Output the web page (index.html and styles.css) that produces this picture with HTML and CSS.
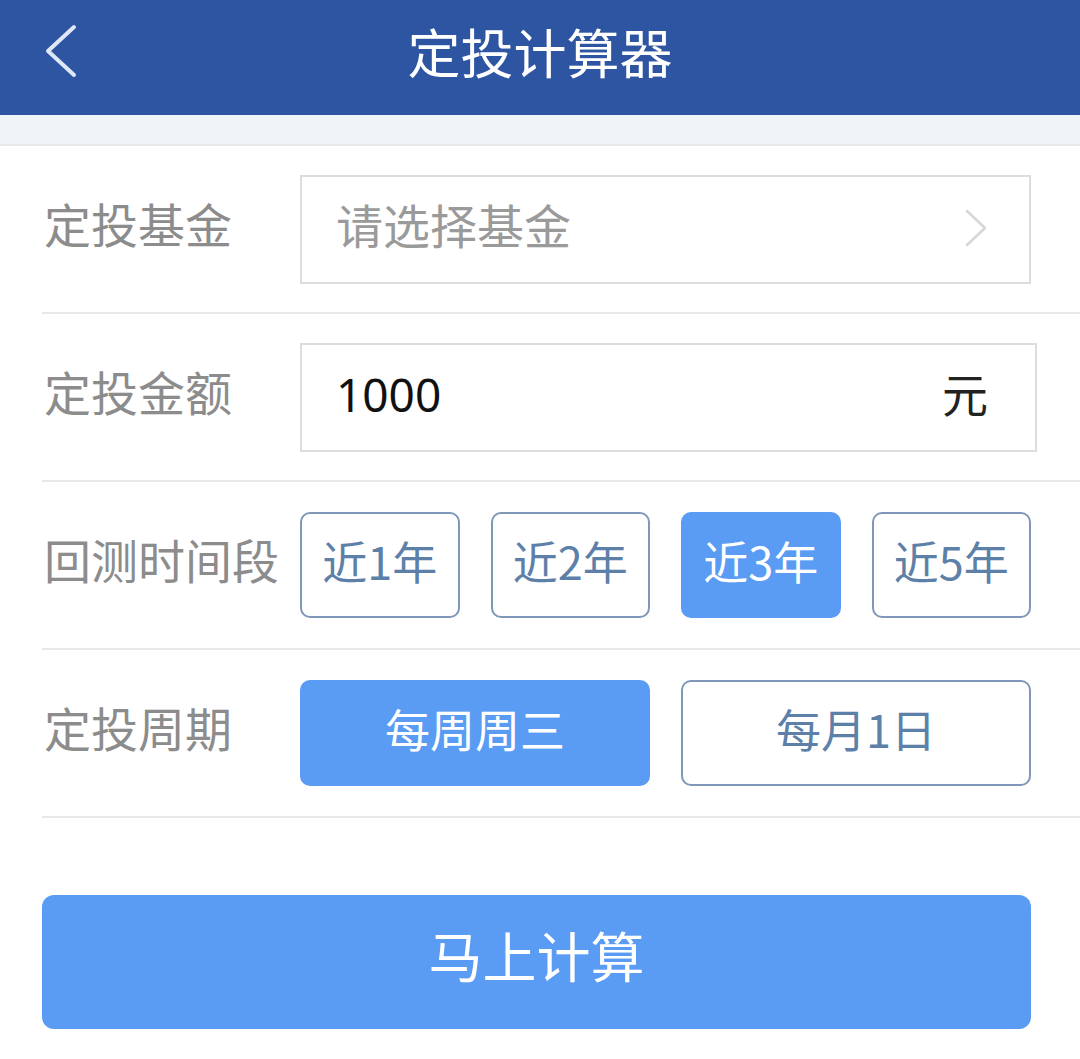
FILE: index.html
```html
<!DOCTYPE html>
<html lang="zh-CN">
<head>
<meta charset="utf-8">
<title>定投计算器</title>
<link rel="stylesheet" href="styles.css">
</head>
<body>
<header class="topbar">
  <span class="back">
    <svg width="40" height="56" viewBox="0 0 40 56"><polyline points="32,4 6,28 32,52" fill="none" stroke="#dfe6f5" stroke-width="4" stroke-linecap="round" stroke-linejoin="round"/></svg>
  </span>
  <h1 class="title">定投计算器</h1>
</header>
<div class="band"></div>
<main class="form">
  <div class="row">
    <div class="label">定投基金</div>
    <div class="field select">
      <span class="placeholder">请选择基金</span>
      <svg class="arrow" width="26" height="40" viewBox="0 0 26 40"><polyline points="4,3 22,20 4,37" fill="none" stroke="#d6d6d6" stroke-width="2.5" stroke-linecap="round" stroke-linejoin="round"/></svg>
    </div>
  </div>
  <div class="row">
    <div class="label">定投金额</div>
    <div class="field amount">
      <span class="value">1000</span>
      <span class="unit">元</span>
    </div>
  </div>
  <div class="row">
    <div class="label">回测时间段</div>
    <div class="years">
      <div class="opt">近1年</div>
      <div class="opt">近2年</div>
      <div class="opt active">近3年</div>
      <div class="opt">近5年</div>
    </div>
  </div>
  <div class="row">
    <div class="label">定投周期</div>
    <div class="periods">
      <div class="opt active">每周周三</div>
      <div class="opt">每月1日</div>
    </div>
  </div>
</main>
<div class="action">
  <button class="calc">马上计算</button>
</div>
</body>
</html>
```
FILE: styles.css
```css
* { box-sizing: border-box; }
html, body { margin: 0; padding: 0; background: #fff; }
body {
  width: 1080px;
  font-family: "Noto Sans CJK SC", "Noto Sans", sans-serif;
}
.topbar {
  height: 115px;
  background: #2e55a2;
  display: flex;
  align-items: center;
  justify-content: center;
  position: relative;
  padding-bottom: 12px;
}
.back {
  position: absolute;
  left: 42px;
  top: 23px;
  display: block;
  line-height: 0;
}
.title {
  margin: 0;
  color: #fff;
  font-size: 53px;
  font-weight: 400;
  line-height: 1.2;
  padding-left: 0;
}
.band {
  height: 31px;
  background: #f1f4f6;
  border-bottom: 2px solid #e6e8ea;
}
.form {
  padding-left: 42px;
}
.row {
  height: 168px;
  border-bottom: 2px solid #e8e8e8;
  display: flex;
  align-items: center;
  padding-right: 49px;
}
.label {
  width: 258px;
  flex: none;
  padding-left: 2px;
  padding-bottom: 12px;
  color: #8c8c8c;
  font-size: 47px;
  line-height: 1.2;
  white-space: nowrap;
}
.field {
  flex: 1;
  height: 109px;
  border: 2px solid #dddddd;
  display: flex;
  align-items: center;
  justify-content: space-between;
  padding: 0 40px 0 34px;
}
.select .placeholder {
  color: #9a9a9a;
  font-size: 47px;
  line-height: 1.2;
  padding-bottom: 10px;
}
.arrow { display: block; margin-bottom: 2px; }
.amount {
  margin-right: -6px;
  padding-right: 47px;
}
.amount .value {
  font-family: "Noto Sans", "Roboto", sans-serif;
  font-size: 46px;
  line-height: 1.2;
  color: #111;
  padding-bottom: 4px;
}
.amount .unit {
  font-size: 46px;
  line-height: 1.2;
  color: #222;
  padding-bottom: 8px;
}
.years {
  flex: 1;
  display: grid;
  grid-template-columns: repeat(4, 1fr);
  gap: 31px;
}
.periods {
  flex: 1;
  display: grid;
  grid-template-columns: 1fr 1fr;
  gap: 31px;
}
.opt {
  height: 106px;
  border: 2px solid #7f98b8;
  border-radius: 10px;
  display: flex;
  align-items: center;
  justify-content: center;
  color: #5d80a9;
  font-size: 45px;
  line-height: 1.2;
  padding-bottom: 9px;
  background: #fff;
}
.opt.active {
  background: #5a9bf4;
  border-color: #5a9bf4;
  color: #fff;
}
.action {
  padding: 77px 49px 0 42px;
}
.calc {
  width: 100%;
  height: 134px;
  border: none;
  border-radius: 12px;
  background: #5a9bf4;
  color: #fff;
  font-family: "Noto Sans CJK SC", sans-serif;
  font-size: 54px;
  line-height: 1.2;
  padding: 0 0 14px 0;
}
```
